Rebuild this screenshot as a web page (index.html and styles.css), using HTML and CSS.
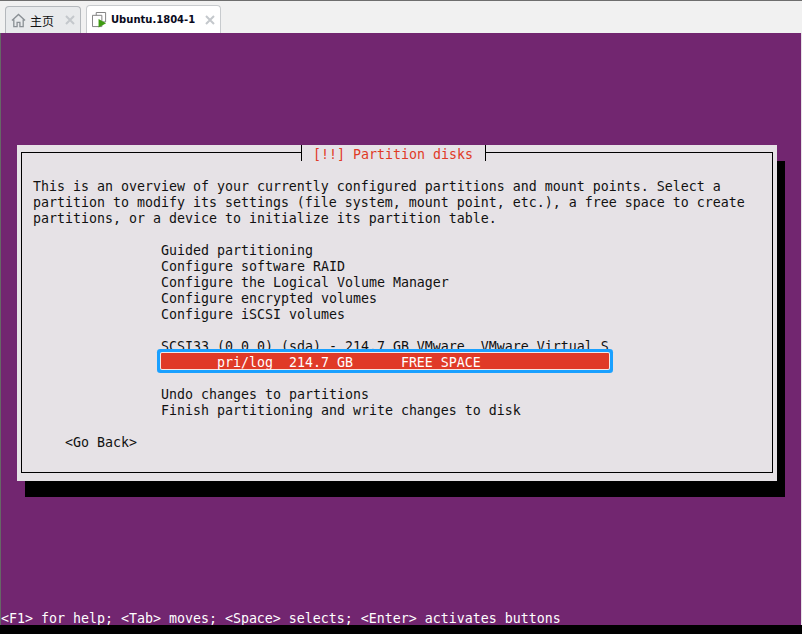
FILE: index.html
```html
<!DOCTYPE html>
<html lang="en">
<head>
<meta charset="utf-8">
<title>Ubuntu.1804-1</title>
<link rel="stylesheet" href="styles.css">
</head>
<body>
<div class="window">
  <nav class="tabs">
    <div class="tab">
      <svg class="tab-icon" width="15" height="15" viewBox="0 0 16 16"><path d="M1 8 8 1.500 15 8M3 7v7.500h3.500V10h3v4.500H13V7" fill="none" stroke="#8a9095" stroke-width="1.400"/></svg>
      <span class="tab-cjk">主页</span>
      <svg class="tab-close" width="10" height="10" viewBox="0 0 10 10"><path d="M1 1 9 9M9 1 1 9" stroke="#c4c8cc" stroke-width="2"/></svg>
    </div>
    <div class="tab tab-active">
      <svg class="tab-icon" width="15" height="16" viewBox="0 0 16 17"><path d="M4.500 3.500V.5h10v10h-3M.5 3.500h10v12H.5z" fill="none" stroke="#7d7d7d"/><path d="M7 7.500 15 12l-8 4.500z" fill="#3f9b12"/></svg>
      <span class="tab-title">Ubuntu.1804-1</span>
      <svg class="tab-close" width="10" height="10" viewBox="0 0 10 10"><path d="M1 1 9 9M9 1 1 9" stroke="#c4c8cc" stroke-width="2"/></svg>
    </div>
  </nav>
  <main class="screen">
    <section class="dialog">
      <div class="frame">
        <h1 class="title">[!!] Partition disks</h1>
        <div class="intro">
          <div class="line">This is an overview of your currently configured partitions and mount points. Select a</div>
          <div class="line">partition to modify its settings (file system, mount point, etc.), a free space to create</div>
          <div class="line">partitions, or a device to initialize its partition table.</div>
        </div>
        <div class="menu">
          <div class="line">Guided partitioning</div>
          <div class="line">Configure software RAID</div>
          <div class="line">Configure the Logical Volume Manager</div>
          <div class="line">Configure encrypted volumes</div>
          <div class="line">Configure iSCSI volumes</div>
          <div class="line gap">SCSI33 (0,0,0) (sda) - 214.7 GB VMware, VMware Virtual S</div>
          <div class="line selected">       pri/log  214.7 GB      FREE SPACE</div>
          <div class="line gap">Undo changes to partitions</div>
          <div class="line">Finish partitioning and write changes to disk</div>
        </div>
        <div class="line back">&lt;Go Back&gt;</div>
      </div>
    </section>
    <footer class="line status">&lt;F1&gt; for help; &lt;Tab&gt; moves; &lt;Space&gt; selects; &lt;Enter&gt; activates buttons</footer>
  </main>
  <div class="bottom-bar"></div>
</div>
</body>
</html>
```
FILE: styles.css
```css
* { box-sizing: border-box; }
html, body { margin: 0; padding: 0; }
body { width: 802px; height: 634px; overflow: hidden; background: #000; }
.window { display: flex; flex-direction: column; width: 802px; height: 634px; }

.tabs {
  display: flex; align-items: flex-end; gap: 5px;
  height: 33px; padding-left: 5px;
  background: #f1f1f1; border-top: 1px solid #6e6e6e;
  flex: none;
}
.tab {
  display: flex; align-items: center;
  width: 76px; height: 27px; padding-left: 5px;
  background: #e8eaec;
  border: 1px solid #b4b8bc; border-bottom: 0;
  border-radius: 4px 4px 0 0;
}
.tab-active { width: 135px; height: 28px; background: #fff; border-color: #c8cbce; }
.tab-icon { flex: none; }
.tab-cjk { margin-left: 4px; font: 12px "Noto Sans CJK SC", sans-serif; color: #111; }
.tab-title { margin-left: 4px; font: bold 10px "DejaVu Sans", sans-serif; color: #0a0a20; white-space: nowrap; }
.tab-close { flex: none; margin-left: auto; margin-right: 5px; }

.screen {
  flex: 1; display: flex; flex-direction: column;
  padding: 112px 0 0 16px;
  background: #722670;
  border-left: 1px solid #666;
  border-right: 1px solid #e6e2e6;
}
.line {
  height: 16px;
  font: 13.29px/20px "DejaVu Sans Mono", monospace;
  white-space: pre;
}
.dialog {
  width: 760px; height: 336px; padding: 7px 4px 8px;
  background: #e6e2e6; color: #111;
  box-shadow: 8px 16px 0 #000;
}
.frame { height: 321px; border: 1px solid #000; }
.title {
  width: 185px; height: 16px; margin: -8px 0 0 279px; padding-left: 11px;
  background: #e6e2e6;
  border-left: 1px solid #000; border-right: 1px solid #000;
  font: 400 13.29px/20px "DejaVu Sans Mono", monospace;
  color: #e03a27;
}
.intro { margin: 16px 0 0 11px; }
.menu { margin: 16px 0 0 139px; }
.gap { margin-top: 16px; }
.selected {
  position: relative; width: 448px;
  background: #e03a27; color: #fff;
  box-shadow: 0 0 0 1px #f4e8e4, 0 0 0 4px #1aa0ff;
  border-radius: 1px;
}
.back { margin: 16px 0 0 43px; }
.status { margin-top: auto; color: #fff; margin-left: -16px; }
.bottom-bar { height: 9px; flex: none; background: #000; }
```
